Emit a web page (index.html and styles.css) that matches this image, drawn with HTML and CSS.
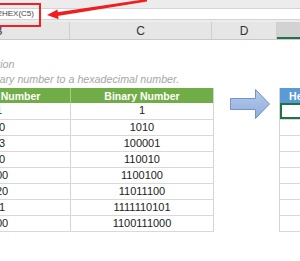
FILE: index.html
```html
<html>
  <head>
    <meta charset="UTF-8" />
    <title>BIN2HEX</title>
    <link rel="stylesheet" href="styles.css">
  </head>
  <body>
    <div class="formula-bar">
      <div class="formula-input"><span class="formula-text">=BIN2HEX(C5)</span></div>
      <div class="callout-box"></div>
      <svg class="callout-arrow" width="300" height="24" viewBox="0 0 300 24">
        <polygon points="147,-1 147,1.6 56,16.2 55.4,12.6" fill="#f01e1e" />
        <polygon points="47,15 57.5,9.6 58.6,19.2" fill="#f01e1e" />
      </svg>
    </div>

    <div class="col-heads">
      <div class="col-head col-b">B</div>
      <div class="col-head col-c">C</div>
      <div class="col-head col-d">D</div>
      <div class="col-head col-e selected">E</div>
    </div>

    <div class="sheet">
      <p class="desc desc-title">Description</p>
      <p class="desc desc-text">Convert a binary number to a hexadecimal number.</p>

      <div class="tables">
        <table class="data data-green">
          <thead>
            <tr><th>Decimal Number</th><th>Binary Number</th></tr>
          </thead>
          <tbody>
            <tr><td>1</td><td>1</td></tr>
            <tr><td>10</td><td>1010</td></tr>
            <tr><td>33</td><td>100001</td></tr>
            <tr><td>50</td><td>110010</td></tr>
            <tr><td>100</td><td>1100100</td></tr>
            <tr><td>220</td><td>11011100</td></tr>
            <tr><td>61</td><td>1111110101</td></tr>
            <tr><td>700</td><td>1100111000</td></tr>
          </tbody>
        </table>

        <div class="arrow-col">
          <svg width="65" height="32" viewBox="0 0 65 32">
            <defs>
              <linearGradient id="blue" x1="0" y1="0" x2="0" y2="1">
                <stop offset="0" stop-color="#b7cbea" />
                <stop offset="1" stop-color="#8fadde" />
              </linearGradient>
            </defs>
            <polygon points="16.5,10.5 41.5,10.5 41.5,1.5 55.5,16 41.5,30.5 41.5,21.5 16.5,21.5"
              fill="url(#blue)" stroke="#7393c9" stroke-width="1" />
          </svg>
        </div>

        <table class="data data-blue">
          <thead>
            <tr><th>Hexadecimal Number</th></tr>
          </thead>
          <tbody>
            <tr><td class="active"></td></tr>
            <tr><td></td></tr>
            <tr><td></td></tr>
            <tr><td></td></tr>
            <tr><td></td></tr>
            <tr><td></td></tr>
            <tr><td></td></tr>
            <tr><td></td></tr>
          </tbody>
        </table>
      </div>
    </div>
  </body>
</html>
```

FILE: styles.css
```css
/* sheet screenshot */
html,
body {
  margin: 0;
  padding: 0;
  background: white;
  overflow: hidden;
}
body {
  width: 300px;
  height: 261px;
  font-family: "Liberation Sans", Arial, sans-serif;
  color: #222;
}

/** formula bar */
.formula-bar {
  position: relative;
  box-sizing: border-box;
  height: 22px;
  padding-top: 8px;
  background: #ececec;
}
.formula-input {
  box-sizing: border-box;
  height: 12px;
  border-top: 1px solid #d4d4d4;
  border-bottom: 1px solid #d4d4d4;
  background: white;
  overflow: hidden;
  white-space: nowrap;
}
.formula-text {
  display: block;
  margin-left: -20.5px;
  font-size: 8px;
  line-height: 10px;
  color: #444;
}
.callout-box {
  position: absolute;
  top: 3px;
  left: -4px;
  width: 41px;
  height: 20px;
  border: 2px solid #ee2222;
}
.callout-arrow {
  position: absolute;
  top: 0;
  left: 0;
}

/** column headings */
.col-heads {
  display: flex;
  height: 18px;
  margin-left: -72px;
  border-bottom: 1px solid #c9c9c9;
  background: #e6e6e6;
  box-sizing: border-box;
}
.col-head {
  box-sizing: border-box;
  flex: none;
  border-right: 1px solid #cfcfcf;
  font-size: 12px;
  line-height: 18px;
  text-align: center;
  color: #333;
}
.col-b,
.col-c {
  width: 142px;
}
.col-d {
  width: 65px;
}
.col-e {
  width: 126px;
}
.col-head.selected {
  background: #d2d2d2;
  border-bottom: 2px solid #217346;
}

/** sheet body */
.sheet {
  margin-left: -72px;
  padding-top: 16px;
}
.desc {
  margin: 0;
  font-size: 10.7px;
  font-style: italic;
  color: #a6a6a6;
  white-space: nowrap;
}
.desc-title {
  height: 16px;
  line-height: 16px;
  padding-left: 33px;
}
.desc-text {
  height: 14px;
  line-height: 14px;
  margin-bottom: 2px;
  padding-left: 8px;
}

.tables {
  display: flex;
  align-items: flex-start;
}
.arrow-col {
  flex: none;
  width: 65px;
}
.arrow-col svg {
  display: block;
}

/** tables */
.data {
  flex: none;
  border-collapse: collapse;
  table-layout: fixed;
  font-size: 11px;
}
.data th {
  height: 15px;
  padding: 0;
  font-size: 10.5px;
  font-weight: bold;
  color: white;
  text-align: center;
  white-space: nowrap;
  overflow: hidden;
}
.data td {
  box-sizing: border-box;
  height: 16px;
  padding: 0;
  border-bottom: 1px solid #d9d9d9;
  text-align: center;
  line-height: 15px;
}
.data-green {
  width: 284px;
  border-right: 1px solid #d4d4d4;
}
.data-green th,
.data-green td {
  width: 142px;
}
.data-green th {
  background: #70ad47;
}
.data-green th:first-child {
  border-right: 1px solid #a2cb86;
}
.data-green td:first-child {
  border-right: 1px solid #d4d4d4;
}
.data-blue {
  width: 126px;
  border-left: 1px solid #d4d4d4;
}
.data-blue th {
  background: #5b9bd5;
}
.data-blue td.active {
  box-shadow: inset 0 0 0 2px #217346;
}
```
